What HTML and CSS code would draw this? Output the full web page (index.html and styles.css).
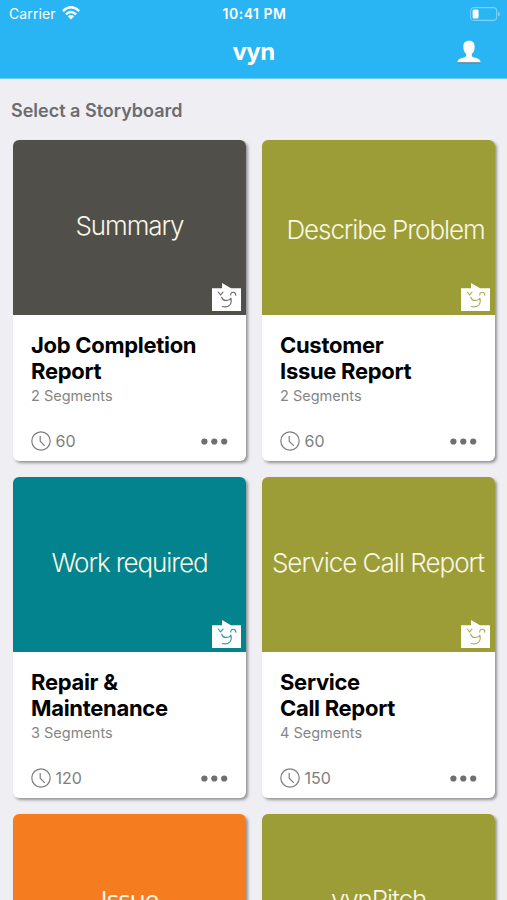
FILE: index.html
```html
<!DOCTYPE html>
<html lang="en">
<head>
<meta charset="utf-8">
<title>vyn</title>
<link rel="stylesheet" href="styles.css">
</head>
<body>
<svg class="sprite" aria-hidden="true">
  <symbol id="face" viewBox="0 0 29 28">
    <path fill="#fff" d="M0 5.3H10V0L19 5.3H29V28H0Z"/>
    <path fill="none" stroke="currentColor" stroke-width="1.1" stroke-opacity=".85" stroke-linecap="round" d="M6.2 9L8.6 11.8L11 9.2M18.7 12Q18.800 9 21.500 9.200Q23.800 9.400 23.800 12.200M9.700 14.200Q11 18 14.700 17.400Q18.500 17.200 18.800 14.800Q20 19 18 21.800Q15 24.800 10.300 23.500"/>
  </symbol>
  <symbol id="clock" viewBox="0 0 20 20">
    <g fill="none" stroke="currentColor" stroke-width="1.2"><circle cx="10" cy="10" r="9.2"/><path d="M9.2 5V10.2L13.8 14.8"/></g>
  </symbol>
  <symbol id="dots" viewBox="0 0 27 7">
    <circle cx="3.4" cy="3.5" r="3.1"/><circle cx="13.3" cy="3.5" r="3.1"/><circle cx="23.2" cy="3.5" r="3.1"/>
  </symbol>
</svg>
<header class="header">
  <div class="status">
    <div class="carrier"><span>Carrier</span>
      <svg class="wifi" viewBox="0 0 18 14"><g fill="none" stroke="#fff" stroke-width="2.4"><path d="M.9 5.1Q9-2.5 17.1 5.1"/><path d="M3.9 8.3Q9 3.6 14.1 8.3"/></g><path fill="#fff" d="M5.8 10.3Q9 7.7 12.2 10.3L9 13.6Z"/></svg>
    </div>
    <time class="time">10:41 PM</time>
    <svg class="battery" viewBox="0 0 30 14"><rect x=".6" y=".6" width="26" height="12.8" rx="3.2" fill="none" stroke="#7dd0f8" stroke-width="1.1"/><rect x="2.6" y="2.4" width="6" height="9.2" rx="1.5" fill="#fff"/><path fill="#7dd0f8" d="M28 4.5Q30 5.5 30 7T28 9.5Z"/></svg>
  </div>
  <div class="nav">
    <h1 class="brand">vyn</h1>
    <svg class="user" viewBox="0 0 24 24"><path fill="#477b98" d="M.5 21.5H23.5V23.3H.5Z"/><path fill="#fff" d="M12 .8C15.800.8 17.800 3 17.600 6.500C17.800 10 16.800 12.300 14.800 14V16C16 18.300 22.500 17.500 23.500 21.500V22.300H.5V21.500C1.500 17.500 8 18.300 9.200 16V14C7.200 12.300 6.200 10 6.400 6.500C6.200 3 8.200.8 12 .8Z"/></svg>
  </div>
</header>
<main class="main">
  <h2 class="heading">Select a Storyboard</h2>
  <div class="grid">
    <article class="card">
      <div class="cover slate"><span class="label">Summary</span><svg class="face"><use href="#face"/></svg></div>
      <div class="body"><h3>Job Completion<br>Report</h3><p>2 Segments</p>
        <div class="foot"><svg class="clock"><use href="#clock"/></svg><span>60</span><svg class="dots"><use href="#dots"/></svg></div></div>
    </article>
    <article class="card">
      <div class="cover olive"><span class="label describe">Describe Problem</span><svg class="face"><use href="#face"/></svg></div>
      <div class="body"><h3>Customer<br>Issue Report</h3><p>2 Segments</p>
        <div class="foot"><svg class="clock"><use href="#clock"/></svg><span>60</span><svg class="dots"><use href="#dots"/></svg></div></div>
    </article>
    <article class="card">
      <div class="cover teal"><span class="label">Work required</span><svg class="face"><use href="#face"/></svg></div>
      <div class="body"><h3>Repair &amp;<br>Maintenance</h3><p>3 Segments</p>
        <div class="foot"><svg class="clock"><use href="#clock"/></svg><span>120</span><svg class="dots"><use href="#dots"/></svg></div></div>
    </article>
    <article class="card">
      <div class="cover olive"><span class="label service">Service Call Report</span><svg class="face"><use href="#face"/></svg></div>
      <div class="body"><h3>Service<br>Call Report</h3><p>4 Segments</p>
        <div class="foot"><svg class="clock"><use href="#clock"/></svg><span>150</span><svg class="dots"><use href="#dots"/></svg></div></div>
    </article>
    <article class="card">
      <div class="cover orange"><span class="label issue">Issue</span></div>
    </article>
    <article class="card">
      <div class="cover olive"><span class="label">vynPitch</span></div>
    </article>
  </div>
</main>
</body>
</html>
```
FILE: styles.css
```css
* { box-sizing: border-box; margin: 0; padding: 0; }
html { overflow: hidden; }
body {
  height: 900px;
  overflow: hidden;
  background: #efeef3;
  font-family: Inter, "Liberation Sans", sans-serif;
}
.sprite { display: none; }
svg { display: block; flex: none; }
.header {
  height: 79px;
  background: #29b4f4;
  color: #fff;
  border-bottom: 1px solid #6dccf8;
}
.status {
  display: grid;
  grid-template-columns: 1fr auto 1fr;
  align-items: center;
  height: 27px;
  padding: 0 7px 0 9px;
  font-size: 14px;
}
.carrier { display: flex; align-items: center; gap: 6px; letter-spacing: .1px; }
.wifi { width: 18px; height: 14px; margin-top: -1px; }
.time { font-size: 14px; font-weight: 600; letter-spacing: .5px; }
.battery { width: 30px; height: 14px; justify-self: end; }
.nav {
  display: grid;
  grid-template-columns: 1fr auto 1fr;
  align-items: center;
  height: 50px;
  padding: 0 26px;
}
.brand { grid-column: 2; font-size: 24px; font-weight: 700; line-height: 30px; letter-spacing: -.6px; }
.user { width: 24px; height: 24px; justify-self: end; }
.main { padding: 20px 12px 0 13px; }
.heading {
  margin-left: -2px;
  height: 41px;
  font-size: 18px;
  line-height: 24px;
  font-weight: 600;
  color: #6c6c6e;
}
.grid {
  display: grid;
  grid-template-columns: 233px 233px;
  grid-auto-rows: 321px;
  gap: 16px;
}
.card {
  border-radius: 6px;
  background: #fff;
  box-shadow: 2px 2px 3px rgba(0, 0, 0, .38);
}
.cover {
  position: relative;
  display: flex;
  align-items: center;
  justify-content: center;
  height: 175px;
  padding-bottom: 3px;
  border-radius: 6px 6px 0 0;
}
.slate { background: #504f4a; color: #504f4a; }
.olive { background: #9c9d36; color: #9c9d36; }
.teal { background: #02838d; color: #02838d; }
.orange { background: #f57d20; color: #f57d20; }
.label {
  font-size: 26px;
  line-height: 32px;
  font-weight: 300;
  letter-spacing: -1.1px;
  color: #f8f7e6;
  white-space: nowrap;
}
.describe { margin: 8px 0 0 14px; }
.service { margin-right: 1px; letter-spacing: -1px; }
.issue { margin-bottom: 3px; font-family: "Open Sans", sans-serif; font-weight: 400; letter-spacing: -.9px; }
.face { position: absolute; right: 5px; bottom: 4px; width: 29px; height: 28px; }
.body { padding: 17px 18px 0; }
.body h3 { font-size: 22px; line-height: 26px; font-weight: 700; letter-spacing: -.3px; color: #000; }
.body p { margin-top: 2px; font-size: 14.5px; line-height: 20px; color: #858585; }
.foot {
  display: flex;
  align-items: center;
  height: 20px;
  margin-top: 25px;
  color: #7e7e7e;
  font-size: 16px;
}
.clock { width: 20px; height: 20px; margin-right: 5px; margin-left: -.5px; }
.dots { width: 27px; height: 7px; margin-left: auto; fill: #6f6f6f; }
```
